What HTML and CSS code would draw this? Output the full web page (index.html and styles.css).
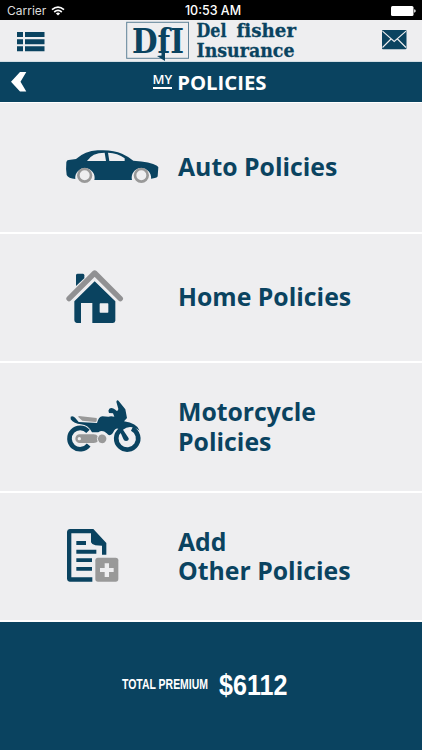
FILE: index.html
```html
<!DOCTYPE html>
<html lang="en">
<head>
    <meta charset="UTF-8">
    <meta name="viewport" content="width=device-width, initial-scale=1.0">
    <title>My Policies</title>
    <link rel="stylesheet" href="styles.css">
</head>
<body>
    <div class="status-bar">
        <span class="carrier">Carrier
            <svg width="14" height="10" viewBox="0 0 14 10" fill="none" stroke="#fff" stroke-width="1.7">
                <path d="M1 3.6Q7-1.4 13 3.6M3.2 6Q7 2.8 10.8 6"/>
                <path d="M7 9.5L4.9 7.4Q7 5.8 9.1 7.4Z" fill="#fff" stroke="none"/>
            </svg>
        </span>
        <span class="time">10:53 AM</span>
        <span class="battery">
            <svg width="25" height="10" viewBox="0 0 25 10" fill="#fff">
                <rect width="22.5" height="10" rx="1.5"/>
                <path d="M23.2 3.3Q24.7 3.6 24.7 5T23.2 6.7Z"/>
            </svg>
        </span>
    </div>

    <header class="header">
        <svg class="menu" width="28" height="20" viewBox="0 0 28 20">
            <path d="M0 0h6v5H0zM8 0h19.5v5H8zM0 7.2h6v5H0zM8 7.2h19.5v5H8zM0 14.3h6v5H0zM8 14.3h19.5v5H8z"/>
        </svg>
        <svg class="logo" width="175" height="41" viewBox="125 20 175 41">
            <rect x="126.7" y="22.3" width="61.8" height="36" fill="none" stroke="#5f8298"/>
            <text class="logo-mark" x="132" y="53" textLength="52" lengthAdjust="spacingAndGlyphs">DfI</text>
            <path d="M157 56l4.500-.5v-4h3.500v9.500z"/>
            <text class="logo-name" x="196.500" y="36.500" textLength="30" lengthAdjust="spacingAndGlyphs">Del</text>
            <text class="logo-name" x="236.500" y="36.500" textLength="59.500" lengthAdjust="spacingAndGlyphs">fisher</text>
            <text class="logo-name" x="196.500" y="56.500" textLength="98" lengthAdjust="spacingAndGlyphs">Insurance</text>
        </svg>
        <svg class="mail" width="25" height="20" viewBox="0 0 25 20">
            <rect width="24.5" height="19.3" rx="1"/>
            <path d="M.5 1.2L12.2 11.5 24 1.2M.5 17.5L9 9M15.5 9L24 17.5" fill="none" stroke="#eeeef0" stroke-width="1.1"/>
        </svg>
    </header>

    <div class="title-bar">
        <svg class="back" width="16" height="20" viewBox="0 0 16 20">
            <path d="M9 0h6.3L9.5 9.8l5.8 9.7H9L0 9.8z"/>
        </svg>
        <h1><span class="my">MY</span>POLICIES</h1>
    </div>

    <main class="policies">
        <a class="policy">
            <svg width="120" height="65" viewBox="0 0 360 195">
                <path d="M49 82Q50 75 56 75L78 72Q105 48 143 46Q188 43 216 56Q234 64 250 77Q302 80 321 92L325 97 323 124Q321 130 303 131A29 29 0 1 0 246 135H133A29 29 0 1 0 76 132Q55 130 50 120Q47 104 49 82Z"/>
                <path class="light" d="M111 78Q126 53 164 53L168 78ZM174 53Q203 54 224 70V78H178Z"/>
                <circle class="ring" cx="104" cy="121" r="19"/>
                <circle class="ring" cx="274" cy="121" r="19"/>
            </svg>
            <span>Auto Policies</span>
        </a>
        <a class="policy home">
            <svg width="120" height="75" viewBox="0 0 360 225">
                <path d="M78 78V45Q79 41 83 41H99Q103 42 103 46V55Z"/>
                <path d="M134 64L196 124V182Q195 189 188 189H127V129H93V189H80Q73 188 73 181V124Z"/>
                <rect class="light" x="149" y="130" width="26" height="28" rx="2"/>
                <path class="roof" d="M57 116L134 39 211 116"/>
            </svg>
            <span>Home Policies</span>
        </a>
        <a class="policy">
            <svg width="120" height="74" viewBox="-15 0 360 222">
                <path class="tyre" d="M101 165A32 32 0 1 1 99 124M196 120A33 33 0 1 0 231 116"/>
                <path d="M47 80Q54 76 61 84L71 96 126 99Q131 80 142 79L160 80Q168 78 178 80L174 70 162 69Q158 61 163 56Q171 51 181 59Q188 67 190 57L184 35Q187 28 191 33L211 58 216 84 207 94Q245 99 254 122Q225 101 204 119L221 145Q222 153 213 153Q207 153 205 147L193 119Q185 111 178 121Q167 145 155 130Q142 118 130 127L111 127Q100 105 78 103Q57 101 47 88Z"/>
                <path class="grey" d="M69 80Q72 77 78 79L125 84Q127 96 121 96L82 92ZM74 133H116Q124 133 130 140A13 13 0 1 1 130 153Q124 159 116 159H74A13 13 0 0 1 74 133Z"/>
                <circle class="light" cx="73" cy="146" r="5"/>
                <path d="M130 137Q124 146 130 156" fill="none" stroke="#eeeef0" stroke-width="3"/>
            </svg>
            <span>Motorcycle<br>Policies</span>
        </a>
        <a class="policy add">
            <svg width="120" height="73" viewBox="-15 0 360 219">
                <path d="M36 35Q37 28 44 27H115L154 69V104H141V77L121 76Q111 75 108 67V40H49V172H112V185H44Q37 185 36 177Z"/>
                <path d="M64 63H93V75H64ZM64 89H124V101H64ZM64 115H111V126H64ZM64 141H111V152H64Z"/>
                <rect class="grey" x="121" y="113" width="69" height="72" rx="8"/>
                <path class="light" d="M149 130H162V144H176V156H162V171H149V156H135V144H149Z"/>
            </svg>
            <span>Add<br>Other Policies</span>
        </a>
    </main>

    <footer class="premium">
        <svg width="170" height="36" viewBox="120 666 170 36">
            <text class="premium-label" x="122" y="688.5" textLength="86" lengthAdjust="spacingAndGlyphs">TOTAL PREMIUM</text>
            <text class="premium-value" x="219" y="694.5" textLength="68.5" lengthAdjust="spacingAndGlyphs">$6112</text>
        </svg>
    </footer>
</body>
</html>
```
FILE: styles.css
```css
* {
    box-sizing: border-box;
}
body {
    margin: 0;
    height: 750px;
    display: flex;
    flex-direction: column;
    background-color: #fff;
    color: #0a4360;
    font-family: "Open Sans", sans-serif;
    overflow: hidden;
}
svg {
    display: block;
    flex: none;
    fill: #0a4360;
}
.status-bar {
    height: 20px;
    display: flex;
    align-items: center;
    padding: 2px 6px 0 7px;
    background-color: #000;
    color: #fff;
    font: 12.5px/20px Inter, sans-serif;
}
.status-bar svg {
    fill: #fff;
}
.carrier, .battery {
    flex: 1;
    display: flex;
    align-items: center;
    gap: 5px;
}
.carrier {
    color: #ddd;
    font-size: 12px;
}
.carrier svg {
    fill: none;
}
.battery {
    justify-content: flex-end;
}
.time {
    margin-left: 3px;
    font-weight: 500;
}
.header {
    height: 42px;
    display: flex;
    justify-content: space-between;
    align-items: flex-start;
    padding: 0 15px 0 17px;
    background-color: #eeeef0;
    border-bottom: 1px solid #d3dde3;
}
.menu {
    margin-top: 12px;
}
.logo {
    margin-left: -2px;
    overflow: visible;
}
.mail {
    margin-top: 10px;
}
.logo-mark {
    font: bold 34px "DejaVu Serif", serif;
    font-variant-ligatures: none;
}
.logo-name {
    font: bold 19px "DejaVu Serif", serif;
    font-variant-ligatures: none;
    stroke: #0a4360;
    stroke-width: .3px;
}
.title-bar {
    height: 40px;
    display: flex;
    align-items: center;
    padding: 0 11px;
    background-color: #0a4360;
    color: #fff;
}
.back {
    fill: #fff;
}
.title-bar h1 {
    flex: 1;
    display: flex;
    justify-content: center;
    align-items: center;
    gap: 5px;
    margin: 0 19px 0 0;
    font-size: 20.3px;
    line-height: 24px;
}
.my {
    margin-top: -3px;
    border-bottom: 2px solid #fff;
    font-size: 13px;
    font-weight: 600;
    line-height: 15px;
}
.policies {
    height: 520px;
    display: grid;
    grid-template-rows: 129px 127px 128px 127px;
    gap: 2px;
    padding-top: 1px;
}
.policy {
    display: flex;
    align-items: center;
    gap: 8px;
    padding-left: 50px;
    background-color: #eeeef0;
    font-size: 24.8px;
    font-weight: bold;
    line-height: 29.5px;
}
.policy span {
    margin-top: -1px;
}
.light {
    fill: #eeeef0;
}
.grey {
    fill: #999;
}
.ring {
    fill: none;
    stroke: #999;
    stroke-width: 8;
}
.roof {
    fill: none;
    stroke: #919193;
    stroke-width: 16;
    stroke-linecap: round;
    stroke-linejoin: round;
}
.tyre {
    fill: none;
    stroke: #0a4360;
    stroke-width: 14;
}
.premium {
    flex: 1;
    display: flex;
    justify-content: center;
    align-items: center;
    padding: 0 12px 4px 0;
    background-color: #0a4360;
}
.premium svg {
    fill: #fff;
    overflow: visible;
}
.premium-label {
    font: bold 14px "Liberation Sans Narrow", "Liberation Sans", sans-serif;
}
.premium-value {
    font: bold 29.5px "Liberation Sans Narrow", "Liberation Sans", sans-serif;
}
```
